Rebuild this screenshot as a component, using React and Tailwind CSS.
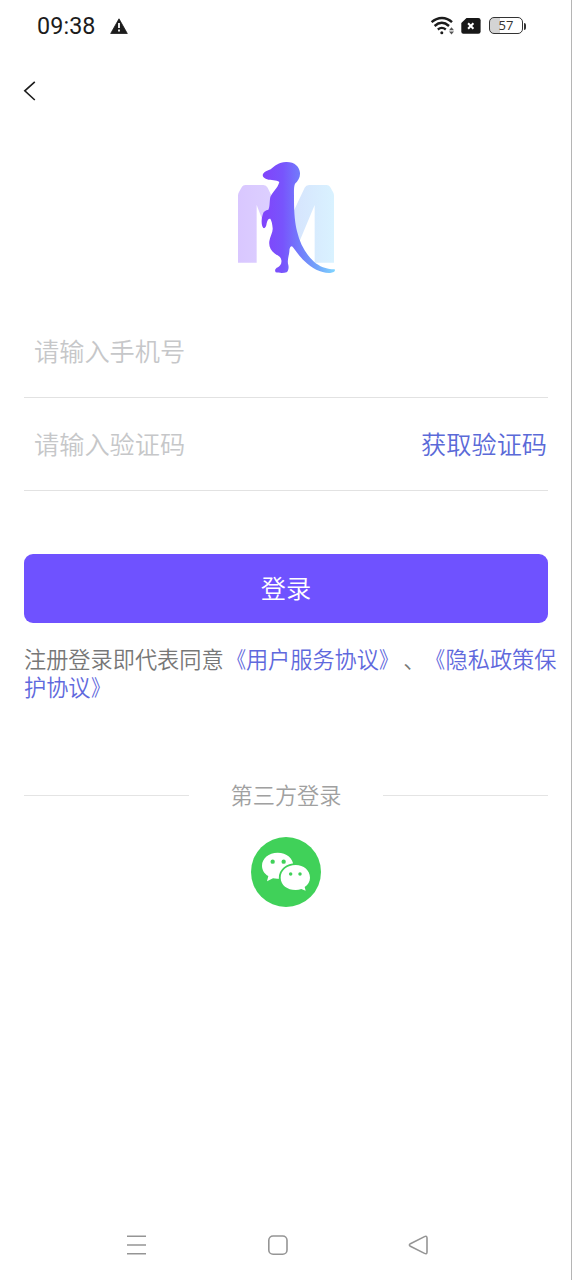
import React from "react";

function StatusBar() {
  return (
    <div className="flex h-[52px] items-center justify-between pl-[37px] pr-[46px] text-[#1c1c1c]">
      <div className="flex items-center">
        <span className="w-[73px] pt-px font-[Roboto,sans-serif] text-[23.3px] font-normal leading-none tracking-[0.1px]">09:38</span>
        <svg className="h-[16px] w-[18px]" viewBox="0 0 18 16">
          <path d="M9 0.8 17.3 15.5H0.7Z" fill="#1c1c1c" stroke="#1c1c1c" strokeWidth="0.8" strokeLinejoin="round" />
          <path d="M9 5v5M9 11.6v2" stroke="#fff" strokeWidth="1.8" />
        </svg>
      </div>
      <div className="-mr-px flex items-center">
        <svg className="h-[20px] w-[30px]" viewBox="0 0 30 20" fill="none" stroke="#1c1c1c">
          <path d="M1.6 6.2C7.8.6 16.2.6 22 6.2" strokeWidth="2.4" />
          <path d="M4.6 10C9.2 6 14.4 6 19 10" strokeWidth="2.4" />
          <path d="M7.8 13.5C10.4 11.4 13.2 11.4 15.8 13.5" strokeWidth="2.3" />
          <circle cx="11.8" cy="16.7" r="1.5" fill="#1c1c1c" stroke="none" />
          <path d="m21.5 11.3 2.5 3h-5ZM21.5 18.5l2.5-3h-5Z" fill="#555" stroke="none" />
        </svg>
        <svg className="mb-px h-[16px] w-[29px]" viewBox="-1 0 29 16">
          <path d="M5.5 0H17.3Q19.6 0 19.6 2.3V13.4Q19.6 15.8 17.3 15.8H2.4Q.3 15.8.3 13.7V5Z" fill="#171717" />
          <path d="m7.1 5.2 5.3 5.5m0-5.5-5.3 5.5" stroke="#fff" strokeWidth="2" />
        </svg>
        <div className="mb-px flex h-[17px] w-[34px] items-center justify-center rounded-[5px] border-[1.5px] border-[#333] bg-linear-to-r from-[#d4d4d4] from-32% to-white to-32% font-['Open_Sans',sans-serif] text-[13px] font-normal leading-none text-[#333]">
          57
        </div>
        <span className="ml-px h-[7px] w-[2px] rounded-r-sm bg-[#333]" />
      </div>
    </div>
  );
}

function Logo() {
  return (
    <svg className="h-[130px] w-[120px]" viewBox="0 0 360 390">
      <defs>
        <linearGradient id="letter" gradientUnits="userSpaceOnUse" x1="36" y1="0" x2="324" y2="0">
          <stop offset="0" stopColor="#d9c7ff" />
          <stop offset="0.33" stopColor="#dccfff" />
          <stop offset="0.62" stopColor="#d6e5fd" />
          <stop offset="1" stopColor="#d9f2ff" />
        </linearGradient>
        <linearGradient id="body" gradientUnits="userSpaceOnUse" x1="118" y1="0" x2="326" y2="0">
          <stop offset="0" stopColor="#8046fb" />
          <stop offset="0.25" stopColor="#7854fc" />
          <stop offset="0.48" stopColor="#7279fb" />
          <stop offset="0.75" stopColor="#72a5fa" />
          <stop offset="1" stopColor="#80d5ff" />
        </linearGradient>
      </defs>
      <path
        d="M36 338V137Q36 131 39 126L48 110Q51 105 58 105H112Q121 105 125 113L138 140V190L112 217L92 165V338ZM200 190L236 113Q240 105 249 105H302Q309 105 312 110L321 126Q324 131 324 137V338H266V165L217 283L200 260Z"
        fill="url(#letter)"
      />
      <path
        d="M111 72C114 65 124 62 134 58C146 47 158 37 180 36C205 35 221 50 222 69C223 82 216 94 207 101C203 110 204 126 204 150C204 190 207 220 213 244C222 282 239 313 264 335C280 349 299 357 326 358C329 363 324 368 312 369C285 370 258 355 236 334C216 315 205 296 198 289C193 289 190 294 190 305C188 321 183 333 187 345C189 354 187 364 182 367C173 370 158 369 149 367C145 361 148 355 156 352C162 348 168 342 166 330C165 321 156 317 147 311C134 302 128 289 130 274C132 259 141 247 140 235C139 222 137 213 133 206C127 205 124 211 122 220C121 230 117 236 112 234C105 226 106 207 110 194C112 184 119 180 127 179C132 171 130 156 133 141C139 126 155 116 160 96C151 89 135 92 123 88C113 84 108 79 111 72Z"
        fill="url(#body)"
      />
    </svg>
  );
}

function WeChatButton() {
  return (
    <button className="flex size-[70px] items-center justify-center rounded-full bg-[#40d159]" aria-label="微信">
      <svg className="size-[70px]" viewBox="0 0 210 210">
        <path d="M80 47C53 47 33 64 33 86C33 99 40 110 52 117L48 133L66 124C95 131 127 112 127 86C127 64 107 47 80 47Z" fill="#fff" />
        <path
          d="M134 84C109 84 89 100 89 122C89 144 109 159 134 159C140 159 146 158 151 156L164 161L161 150C171 143 177 133 177 122C177 100 158 84 134 84Z"
          fill="#fff"
          stroke="#40d159"
          strokeWidth="11"
          paintOrder="stroke"
        />
        <g fill="#40d159">
          <circle cx="65" cy="74" r="6.5" />
          <circle cx="98" cy="74" r="6.5" />
          <circle cx="119" cy="111" r="5.2" />
          <circle cx="147" cy="111" r="5.2" />
        </g>
      </svg>
    </button>
  );
}

function LoginForm() {
  return (
    <div className="ml-6 mr-[23px] flex flex-col text-[25.2px]">
      <label className="flex h-[93px] items-center border-b border-[#e2e2e2] pb-px pl-2.5 text-[#c6c7c9]">请输入手机号</label>
      <div className="flex h-[93px] items-center justify-between border-b border-[#e2e2e2] pb-px pl-2.5">
        <span className="text-[#c6c7c9]">请输入验证码</span>
        <button className="pr-px text-[#5b6ad8]">获取验证码</button>
      </div>
      <button className="mt-[63px] h-[69px] rounded-[9px] bg-[#6f52ff] pb-px text-white">登录</button>
    </div>
  );
}

function OpenMark() {
  return <span className="inline-block w-[22.2px] origin-right scale-x-85 leading-none">《</span>;
}

function CloseMark() {
  return <span className="inline-block w-[22.2px] origin-left scale-x-85 leading-none">》</span>;
}

function Agreement() {
  return (
    <div className="ml-6 mt-[21px] flex flex-col text-[22.2px] leading-[28px] text-[#777] [text-spacing-trim:space-all]">
      <p className="h-[28px] whitespace-nowrap">
        注册登录即代表同意
        <span className="text-[#5f69dd]">
          <OpenMark />
          用户服务协议
          <CloseMark />
        </span>
        <span className="ml-0.5 mr-[-2px]">、</span>
        <span className="text-[#5f69dd]">
          <OpenMark />
          隐私政策保
        </span>
      </p>
      <p className="h-[28px] whitespace-nowrap text-[#5f69dd]">
        护协议
        <CloseMark />
      </p>
    </div>
  );
}

function SystemNav() {
  return (
    <div className="mt-auto flex h-[70px] items-center pl-[126px]">
      <svg className="h-[22px] w-[302px]" viewBox="0 0 302 22" fill="none" stroke="#959595" strokeWidth="1.6">
        <path d="M1 2.2H20M1 11H20M1 19.8H20" />
        <rect x="142.8" y="2" width="18.2" height="18.2" rx="4.3" />
        <path d="M284.4 9.7 298.5 2.6Q301 1.4 301 4V18Q301 20.6 298.5 19.4L284.4 12.3Q282.4 11 284.4 9.7Z" />
      </svg>
    </div>
  );
}

export default function App() {
  return (
    <main className="flex h-[1280px] w-[572px] flex-col border-r border-[#b5b5b5] bg-white font-['Noto_Sans_CJK_SC',sans-serif] font-[350]">
      <StatusBar />
      <header className="flex h-[78px] items-center pl-[23px]">
        <svg className="h-[20px] w-[14px]" viewBox="0 0 14 20" fill="none" stroke="#1c1c1c" strokeWidth="1.6">
          <path d="M11.8 .8 1.8 9.8 11.8 19" />
        </svg>
      </header>
      <div className="mt-5 flex h-[155px] justify-center pl-px">
        <Logo />
      </div>
      <LoginForm />
      <Agreement />
      <div className="ml-6 mr-[23px] mt-[79px] flex h-[32px] items-center justify-between text-[22.2px] text-[#a0a0a0]">
        <span className="h-px w-[165px] bg-[#e4e4e4]" />
        <span>第三方登录</span>
        <span className="h-px w-[165px] bg-[#e4e4e4]" />
      </div>
      <div className="mt-[26px] flex justify-center pl-px">
        <WeChatButton />
      </div>
      <SystemNav />
    </main>
  );
}
